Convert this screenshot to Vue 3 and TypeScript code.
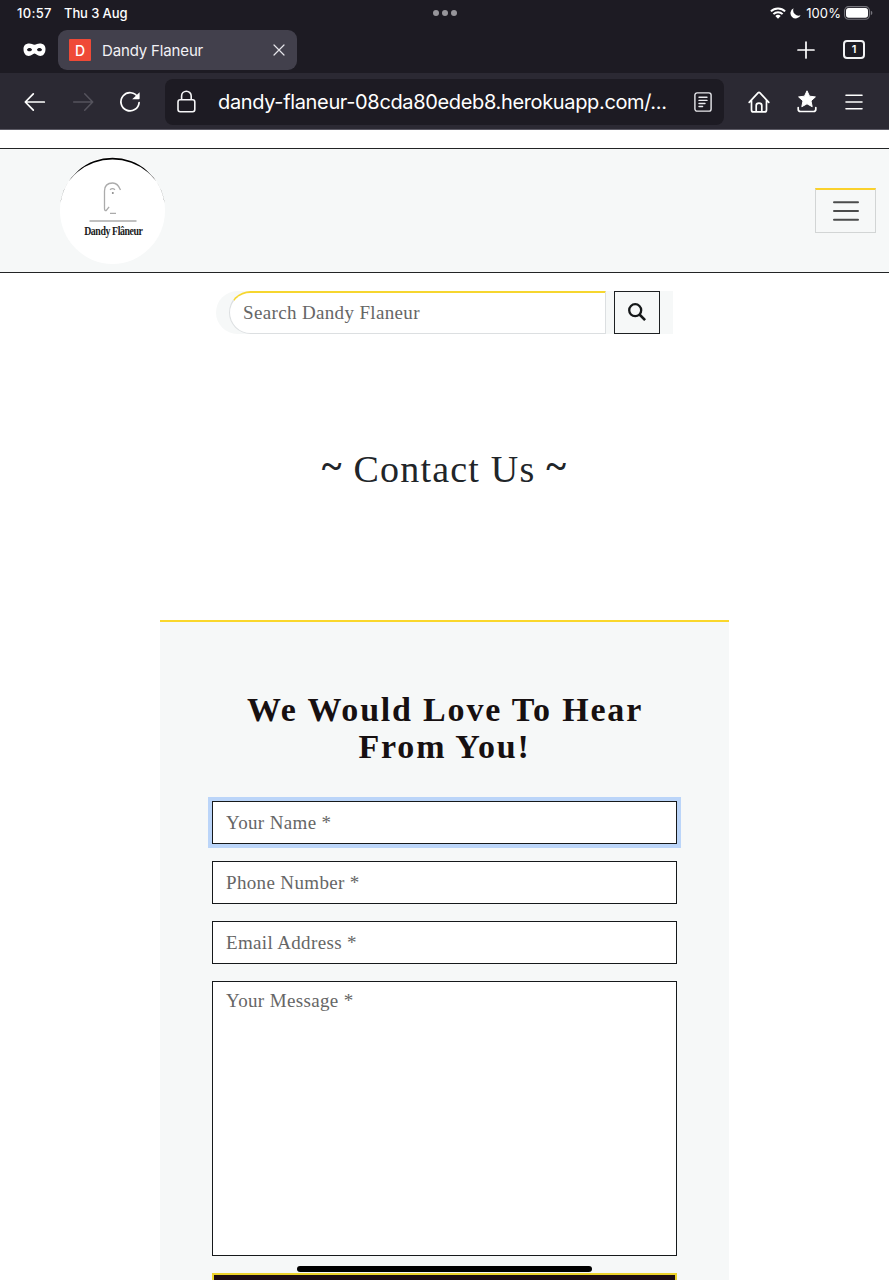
<script setup lang="ts">
interface Field {
  id: string
  placeholder: string
  focused: boolean
}

const fields: Field[] = [
  { id: 'name', placeholder: 'Your Name *', focused: true },
  { id: 'phone', placeholder: 'Phone Number *', focused: false },
  { id: 'email', placeholder: 'Email Address *', focused: false },
]
</script>

<template>
  <div class="screen">
    <header class="chrome">
      <div class="status">
        <span class="time">10:57</span>
        <span class="date">Thu 3 Aug</span>
        <div class="dots"><i></i><i></i><i></i></div>
        <div class="indicators">
          <svg class="wifi" width="16" height="12" viewBox="0 0 16 12" fill="none" stroke="#fff" stroke-width="2">
            <path d="M.9 4.400a10 10 0 0 1 14.200 0M3.400 7.100a6.500 6.500 0 0 1 9.200 0" />
            <path d="M8 11.800 5.300 9.100a3.800 3.800 0 0 1 5.400 0Z" fill="#fff" stroke="none" />
          </svg>
          <svg class="moon" width="11" height="11" viewBox="0 0 11 11">
            <path d="M3.600.3a5.300 5.300 0 1 0 7 7A5.400 5.400 0 0 1 3.600.3Z" fill="#fff" />
          </svg>
          <span class="percent">100%</span>
          <svg class="battery" width="29" height="14" viewBox="0 0 29 14">
            <rect x=".6" y=".6" width="24.800" height="12.600" rx="4" fill="none" stroke="#77767d" stroke-width="1.100" />
            <rect x="2" y="2" width="22" height="9.800" rx="2.700" fill="#fff" />
            <path d="M26.800 4.800q1.600.6 1.600 2.200t-1.600 2.200Z" fill="#77767d" />
          </svg>
        </div>
      </div>

      <div class="tabs">
        <svg class="mask" width="23" height="14" viewBox="0 0 23 14">
          <path
            fill="#fff"
            fill-rule="evenodd"
            d="M6.300.6c2.200 0 3.300 1.200 5.200 1.200S14.500.6 16.700.6C20.500.6 22.500 2.700 22.500 6.100c0 4.400-2.200 6.900-5.300 6.900-3 0-3.800-2.400-5.700-2.400S8.800 13 5.800 13C2.700 13 .5 10.500.5 6.100.5 2.700 2.500.6 6.300.6ZM3.900 6.800C4.500 5.700 5.400 5.100 6.500 5.100s2.100.7 2.600 1.700c-.6 1-1.500 1.500-2.600 1.500S4.400 7.800 3.900 6.800Zm10 0c.5-1 1.500-1.700 2.600-1.700s2 .6 2.600 1.700c-.5 1-1.500 1.500-2.600 1.500s-2-.5-2.600-1.500Z"
          />
        </svg>
        <div class="tab">
          <span class="favicon">D</span>
          <span class="tab-title">Dandy Flaneur</span>
          <svg width="12" height="12" viewBox="0 0 12 12" stroke="#e6e5ea" stroke-width="1.200" stroke-linecap="round">
            <path d="m1 1 10 10M11 1 1 11" />
          </svg>
        </div>
        <svg class="plus" width="18" height="18" viewBox="0 0 18 18" stroke="#fff" stroke-width="1.700" stroke-linecap="round">
          <path d="M9 1v16M1 9h16" />
        </svg>
        <span class="count">1</span>
      </div>

      <div class="toolbar">
        <svg class="back" width="22" height="20" viewBox="0 0 22 20" fill="none" stroke="#fff" stroke-width="1.700" stroke-linecap="round" stroke-linejoin="round">
          <path d="M20.300 10H1.500M9.300 1.800 1.300 10l8 8.200" />
        </svg>
        <svg class="forward" width="22" height="20" viewBox="0 0 22 20" fill="none" stroke="#55535d" stroke-width="1.500" stroke-linecap="round" stroke-linejoin="round">
          <path d="M1.700 10h18.800M12.700 1.800l8 8.200-8 8.200" />
        </svg>
        <svg class="reload" width="22" height="22" viewBox="0 0 22 22" fill="none" stroke="#fff" stroke-width="1.700" stroke-linecap="round">
          <path d="M18.900 6.200A9.100 9.100 0 1 0 20.100 11.600" />
          <path d="M20.600 1.300v6.200c0 .5-.3.8-.8.8h-6.600Z" fill="#fff" stroke="none" />
        </svg>
        <div class="address">
          <svg class="lock" width="19" height="23" viewBox="0 0 19 23" fill="none" stroke="#f5f5f7" stroke-width="1.600">
            <rect x="1" y="9.700" width="16.800" height="12" rx="2.200" />
            <path d="M4.600 9.700V6a4.800 4.800 0 0 1 9.600 0v3.700" />
          </svg>
          <span class="url">dandy-flaneur-08cda80edeb8.herokuapp.com/...</span>
          <svg class="reader" width="18" height="20" viewBox="0 0 18 20" fill="none" stroke="#e9e9ed" stroke-width="1.400" stroke-linecap="round">
            <rect x=".9" y=".9" width="16.200" height="18.200" rx="2.200" />
            <path d="M5 5.300h8M5 8.400h8M5 11.500h6M5 14.500h3.600" />
          </svg>
        </div>
        <svg class="home" width="22" height="22" viewBox="0 0 22 22" fill="none" stroke="#fff" stroke-width="1.700" stroke-linecap="round" stroke-linejoin="round">
          <path d="M1.200 11.300 10 1.900q1-1 2 0l8.800 9.400M3.500 9.300v9.600q0 2 2 2h11q2 0 2-2V9.300M8.200 20.700v-6.200q0-2.400 2.800-2.400t2.800 2.400v6.200" />
        </svg>
        <svg class="star" width="20" height="23" viewBox="0 0 20 23">
          <path d="m10 .8 2.500 5.400 5.900.7-4.400 4 1.200 5.800L10 13.800l-5.200 2.900L6 10.900l-4.400-4 5.900-.7Z" fill="#fff" stroke="#fff" stroke-linejoin="round" />
          <path d="M1.200 17.500v1.700q0 2.300 2.300 2.300h13q2.300 0 2.300-2.300v-1.700" fill="none" stroke="#fff" stroke-width="1.700" stroke-linecap="round" />
        </svg>
        <svg class="menu" width="18" height="16" viewBox="0 0 18 16" stroke="#fff" stroke-width="1.600" stroke-linecap="round">
          <path d="M1 1.200h16M1 8h16M1 14.800h16" />
        </svg>
      </div>
    </header>

    <nav class="navbar">
      <div class="logo">
        <svg class="rim" width="105" height="107" viewBox="0 0 105 107">
          <path d="M.5 46A52.500 52.500 0 0 1 104.500 46A52.300 48.700 0 0 0 .5 46Z" fill="#000" />
        </svg>
        <svg class="face" width="48" height="41" viewBox="0 0 48 41" fill="none" stroke="#ababab" stroke-width="1.300">
          <path d="M31.500 9C29.500 3.800 27 2 23.700 2 18 2 15.500 5.500 15.500 10v17.500q0 2.500 1.800 2l2.800-3.700" />
          <path d="M21 8.700q2.500-2 5 0M21 32.300h6" />
          <circle cx="23.800" cy="12" r="1" fill="#888" stroke="none" />
          <path d="M.5 40h47" />
        </svg>
        <span class="brand">Dandy Flâneur</span>
      </div>
      <button class="toggler" type="button" aria-label="Menu">
        <svg width="28" height="22" viewBox="0 0 28 22" stroke="#4b4c4c" stroke-width="2" stroke-linecap="round">
          <path d="M2 2.200h24M2 11h24M2 19.700h24" />
        </svg>
      </button>
    </nav>

    <main>
      <form class="search">
        <input class="search-input" type="text" placeholder="Search Dandy Flaneur" />
        <button class="search-button" type="button" aria-label="Search">
          <svg width="18" height="18" viewBox="0 0 18 18" fill="none" stroke="#151819" stroke-width="2.300">
            <circle cx="7.200" cy="7.200" r="6" />
            <path d="m11.500 11.500 5.600 5.600" stroke-width="2.600" />
          </svg>
        </button>
      </form>

      <h1><span class="tilde">~</span> Contact Us <span class="tilde">~</span></h1>

      <section class="panel">
        <h2>We Would Love To Hear<br />From You!</h2>
        <input
          v-for="field in fields"
          :key="field.id"
          class="field"
          :class="{ focused: field.focused }"
          type="text"
          :placeholder="field.placeholder"
        />
        <textarea class="field message" placeholder="Your Message *"></textarea>
        <button class="submit" type="button" aria-label="Send"></button>
      </section>
    </main>
    <div class="home-indicator"></div>
  </div>
</template>

<style>
body {
  overflow: hidden;
}
</style>

<style scoped>
.screen,
.screen * {
  box-sizing: border-box;
}
.screen {
  position: relative;
  width: 889px;
  height: 1280px;
  overflow: hidden;
  background: #fff;
  font-family: "Liberation Serif", serif;
}
svg {
  display: block;
  flex: none;
}
.chrome {
  height: 130px;
  background: #1d1b23;
  color: #fff;
  font-family: Inter, sans-serif;
}
.status {
  display: flex;
  align-items: center;
  height: 26px;
  padding: 0 16px 0 17px;
  font-size: 13px;
  font-weight: 500;
  white-space: nowrap;
}
.time {
  width: 47px;
  letter-spacing: 0.3px;
}
.date {
  width: 369px;
  letter-spacing: -0.1px;
}
.dots {
  display: flex;
  gap: 3px;
}
.dots i {
  width: 6px;
  height: 6px;
  border-radius: 50%;
  background: #97969b;
}
.indicators {
  display: flex;
  align-items: center;
  margin-left: auto;
}
.moon {
  margin: 0 5px 0 4px;
}
.percent {
  margin-right: 3px;
  font-weight: 400;
  letter-spacing: 0.1px;
}
.tabs {
  display: flex;
  align-items: center;
  height: 47px;
  padding: 0 24px 0 23px;
}
.tab {
  display: flex;
  align-items: center;
  width: 239px;
  height: 40px;
  margin: 1px auto 0 12px;
  padding: 0 12px 0 11px;
  border-radius: 9px;
  background: #42404c;
}
.favicon {
  width: 22px;
  height: 22px;
  margin-right: 11px;
  border-radius: 1px;
  background: #ef4a37;
  font-size: 14px;
  font-weight: 500;
  line-height: 23px;
  text-align: center;
}
.tab-title {
  margin-right: auto;
  color: #f2f1f5;
  font-size: 15px;
  letter-spacing: -0.15px;
}
.plus {
  margin-right: 28px;
}
.count {
  width: 22px;
  height: 19px;
  border: 2px solid #f2f2f4;
  border-radius: 4px;
  font-size: 11px;
  font-weight: 600;
  line-height: 15px;
  text-align: center;
}
.toolbar {
  display: flex;
  align-items: center;
  height: 57px;
  padding: 1px 26px 0 24px;
  border-bottom: 1px solid #5c5a65;
  background: #2b2933;
}
.forward {
  margin-left: 26px;
}
.reload {
  margin-left: 25px;
}
.address {
  display: flex;
  align-items: center;
  width: 559px;
  height: 46px;
  margin: 0 24px;
  padding: 0 12px;
  border-radius: 8px;
  background: #1d1b23;
}
.url {
  margin: 0 auto 0 22px;
  padding-top: 1px;
  font-size: 20px;
  letter-spacing: -0.350px;
  white-space: nowrap;
}
.star {
  margin: 0 auto;
}
.home {
  margin-right: -2px;
}
.navbar {
  display: flex;
  align-items: center;
  justify-content: space-between;
  height: 125px;
  margin-top: 18px;
  padding: 0 13px 0 60px;
  border: solid #222425;
  border-width: 1px 0;
  background: #f6f8f8;
}
.logo {
  position: relative;
  display: flex;
  flex-direction: column;
  align-items: center;
  width: 105px;
  height: 107px;
  padding-top: 24px;
  border-radius: 50%;
  background: #fff;
}
.rim {
  position: absolute;
  top: 0;
  left: 0;
}
.brand {
  margin-top: 1px;
  padding-left: 3px;
  color: #1c1c1c;
  font-size: 12px;
  font-weight: 700;
  line-height: 16px;
  letter-spacing: -0.500px;
  white-space: nowrap;
  transform: scaleX(0.820);
}
.toggler {
  display: grid;
  place-items: center;
  width: 61px;
  height: 45px;
  padding: 0;
  border: 1px solid #d2d5d5;
  border-top: 2px solid #fad12c;
  background: transparent;
}
.search {
  display: flex;
  width: 457px;
  height: 43px;
  margin: 18px 0 0 216px;
  padding: 0 13px;
  border-radius: 22px 0 0 22px;
  background: #f6f8f8;
}
.search-input {
  width: 377px;
  height: 43px;
  margin-right: auto;
  padding: 0 13px;
  border: 1px solid #dcdfe1;
  border-top: 2px solid #f6d62f;
  border-radius: 22px 0 0 22px;
  background: #fff;
}
.search-input,
.field {
  font-family: "Liberation Serif", serif;
  font-size: 19px;
  letter-spacing: 0.35px;
  outline: none;
}
.search-input::placeholder,
.field::placeholder {
  color: #666;
  opacity: 1;
}
.search-button {
  display: grid;
  place-items: center;
  width: 46px;
  height: 43px;
  padding: 0 0 2px;
  border: 1px solid #1d2022;
  background: #f6f8f8;
}
h1 {
  margin: 111px 0 0;
  color: #212529;
  font-size: 38px;
  font-weight: 400;
  line-height: 48px;
  letter-spacing: 1.200px;
  text-align: center;
}
.tilde {
  position: relative;
  top: -3px;
  font-weight: 700;
}
.panel {
  display: flex;
  flex-direction: column;
  align-items: stretch;
  width: 569px;
  margin: 127px auto 0;
  padding: 69px 52px 0;
  border-top: 2px solid #fad72c;
  background: #f6f8f8;
}
h2 {
  margin: 0 0 36px;
  color: #171011;
  font-size: 34px;
  font-weight: 700;
  line-height: 37px;
  letter-spacing: 1.800px;
  text-indent: 1px;
  text-align: center;
  white-space: nowrap;
}
.field {
  display: block;
  width: 465px;
  height: 43px;
  margin: 0 0 17px;
  padding: 0 13px;
  border: 1px solid #16191b;
  border-radius: 0;
  background: #fff;
}
.focused {
  box-shadow: 0 0 0 4px #bbd5f9;
}
.message {
  height: 275px;
  padding-top: 7px;
  line-height: 24px;
  resize: none;
}
.submit {
  height: 60px;
  border: 2px solid #edd32c;
  border-radius: 0;
  background: #1d0d12;
}
.home-indicator {
  position: absolute;
  bottom: 8px;
  left: 297px;
  width: 295px;
  height: 6px;
  border-radius: 3px;
  background: #000;
}
</style>
